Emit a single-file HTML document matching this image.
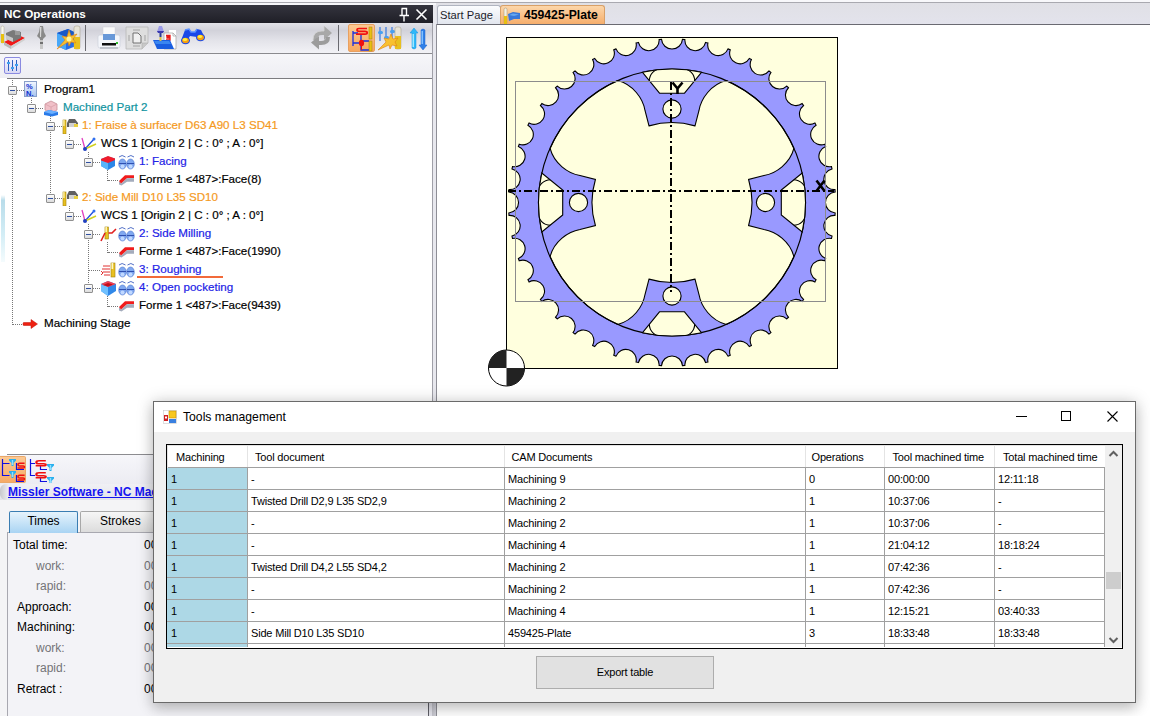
<!DOCTYPE html>
<html><head><meta charset="utf-8">
<style>
*{margin:0;padding:0;box-sizing:border-box}
html,body{width:1150px;height:716px;overflow:hidden;background:#fff;font-family:"Liberation Sans",sans-serif;position:relative}
.a{position:absolute}
svg{display:block}
#topstrip{left:0;top:0;width:1150px;height:5px;background:#f6f6f9;border-top:2px solid #f8f8fb}
#topline{left:0;top:2px;width:1150px;height:1px;background:#a9a9b0}
/* left panel */
#lp{left:0;top:5px;width:433px;height:711px;background:#fff}
#hdr{left:0;top:5px;width:433px;height:18px;background:linear-gradient(#34343e,#1f1f27);}
#hdr .t{left:4px;top:2px;color:#fff;font-weight:bold;font-size:11.7px;line-height:14px;white-space:nowrap}
#tb1{left:0;top:23px;width:433px;height:30px;background:linear-gradient(#e2e2e8 0,#d2d2da 25%,#e4e4ea 60%,#f2f2f6 100%)}
#tb1line{left:0;top:53px;width:433px;height:1px;background:#8a8a8e}
#tb2{left:0;top:54px;width:433px;height:24px;background:linear-gradient(#f6f6f9,#eeeef3)}
#tb2line{left:7px;top:78px;width:426px;height:1px;background:#7c7c80}
#lpborder{left:432px;top:23px;width:1px;height:693px;background:#a0a0a8}
#splitter{left:433px;top:5px;width:3px;height:711px;background:#e8e8ee}
/* tree */
.tr{position:absolute;font-size:11.6px;white-space:nowrap;line-height:14px;-webkit-text-stroke:0.2px currentColor}
.exp{position:absolute;width:9px;height:9px;border:1px solid #909090;background:linear-gradient(#fdfdfd,#dcdcdc);border-radius:1px}
.exp:after{content:"";position:absolute;left:1px;top:3px;width:5px;height:1px;background:#3050a0}
.dh{position:absolute;height:1px;border-top:1px dotted #777}
.dv{position:absolute;width:1px;border-left:1px dotted #777}
/* doc area */
#docstrip{left:436px;top:3px;width:714px;height:21px;background:linear-gradient(#e0e0e6,#e3e3ec)}
#docline{left:436px;top:24px;width:714px;height:1px;background:#6a6a72}
#docleft{left:436px;top:24px;width:1px;height:692px;background:#8e8e96}
#tab1{left:437px;top:5px;width:64px;height:19px;background:linear-gradient(#fbfcfe,#e2e6ee);border:1px solid #b0b4c0;border-bottom:none;border-radius:3px 3px 0 0;font-size:11.2px;color:#1c1c2c;padding:2px 0 0 2px;line-height:14px;white-space:nowrap}
#tab2{left:500px;top:5px;width:105px;height:19px;background:linear-gradient(#fcd6aa,#f6ae6c);border:1px solid #d8a068;border-bottom:none;border-radius:3px 3px 0 0;font-size:12.2px;font-weight:bold;color:#000;padding:2px 0 0 23px;line-height:14px;white-space:nowrap}
/* dialog */
#dlgshadow{left:140px;top:390px;width:1010px;height:326px;background:radial-gradient(ellipse at center,rgba(0,0,0,0.10),rgba(0,0,0,0) 70%)}
#dlg{left:153px;top:401px;width:983px;height:302px;background:#f0f0f0;border:1px solid #6a6a6a;box-shadow:0 1px 15px 1px rgba(0,0,0,0.18),0 6px 12px rgba(0,0,0,0.14)}
#dlgtitle{left:0;top:0;width:981px;height:30px;background:#fff}
#grid{left:12px;top:43px;width:957px;height:204px;border:1px solid #000;border-width:2px 2px 2px 2px;background:#fff;overflow:hidden}
.gt{position:absolute;font-size:11px;letter-spacing:-0.18px;color:#000;white-space:nowrap;line-height:13px}
#exportbtn{left:382px;top:254px;width:178px;height:33px;background:#e1e1e1;border:1px solid #adadad;font-size:11px;letter-spacing:-0.2px;text-align:center;padding-top:9px}
.lb{position:absolute;font-size:12px;color:#000;white-space:nowrap;line-height:14px}
.lb.g{color:#747478}
</style></head>
<body>
<div id="topstrip" class="a"></div>
<div id="topline" class="a"></div>
<div id="lp" class="a"></div>
<div id="hdr" class="a"><div class="a t">NC Operations</div></div>
<div id="tb1" class="a"></div>
<div id="tb1line" class="a"></div>
<div id="tb2" class="a"></div>
<div id="tb2line" class="a"></div>
<div id="lpborder" class="a"></div>
<div id="splitter" class="a"></div>

<div class="a" style="left:399px;top:7px;width:11px;height:15px"><svg width="11" height="15"><path d="M2.5,1.5 L7.5,1.5 L7.5,8 M3,1.5 L3,8 M0.5,8.5 L10,8.5 M5,8.5 L5,14.5" fill="none" stroke="#fff" stroke-width="1.4"/></svg></div>
<div class="a" style="left:415px;top:8px;width:13px;height:13px"><svg width="13" height="13"><path d="M1.5,1.5 L11.5,11.5 M11.5,1.5 L1.5,11.5" stroke="#fff" stroke-width="1.6"/></svg></div>
<!-- toolbar 1 icons -->
<div class="a" style="left:0;top:25px;width:26px;height:26px"><svg width="26" height="26">
<rect x="1" y="1" width="3" height="17" rx="1.5" fill="#f6f6f0" stroke="#b0a890" stroke-width="0.5"/><rect x="1" y="9" width="3" height="9" fill="#e8c010"/>
<path d="M4,17 L18,10 L25,13 L11,21Z" fill="#f01818"/><path d="M4,17 L11,21 L11,24 L4,20Z" fill="#b8b8b8"/><path d="M11,21 L25,13 L25,15 L11,24Z" fill="#d0d0d0"/>
<path d="M6,8 L13,5 L21,7 L21,13 L13,17 L6,14Z" fill="#7a7a7a"/><path d="M6,10 L13,13 L13,17 L6,14Z" fill="#c8c8c8"/><rect x="15" y="6" width="5" height="4" fill="#9a9a9a"/>
</svg></div>
<div class="a" style="left:36px;top:25px;width:11px;height:26px"><svg width="11" height="26">
<path d="M4,1 L7,1 L8,7 L10,11 L8,13 L7,14 L7,24 L4,24 L4,14 L3,13 L1,11 L3,7Z" fill="#8a8a8a"/><path d="M4,2 L5.5,2 L5,12 L4,12Z" fill="#d8d8d8"/><rect x="4" y="15" width="3" height="9" fill="#c8c8c8"/><rect x="4" y="17" width="3" height="2" fill="#707070"/>
</svg></div>
<div class="a" style="left:56px;top:25px;width:26px;height:26px"><svg width="26" height="26">
<path d="M1,8 L12,4 L20,8 L20,21 L10,25 L1,21Z" fill="#2a6ee8"/><path d="M1,8 L10,12 L10,25 L1,21Z" fill="#48a8f8"/><path d="M1,8 L12,4 L20,8 L10,12Z" fill="#1858c8"/>
<rect x="18" y="1" width="6" height="23" rx="2" fill="#e8e4d8" stroke="#a09880" stroke-width="0.5"/><rect x="18" y="12" width="6" height="12" fill="#e8c020"/>
<path d="M1,24 L9,15 L6,11 L11,12 L13,5 L15,11 L21,9 L17,14 L20,18 L15,17 L13,21 L12,17Z" fill="#f8c030" stroke="#e08010" stroke-width="0.6"/><circle cx="13" cy="14" r="2.5" fill="#fff4a0"/>
</svg></div>
<div class="a" style="left:85px;top:25px;width:1px;height:26px;background:#6a6a70"></div>
<div class="a" style="left:97px;top:26px;width:24px;height:24px"><svg width="24" height="24">
<rect x="6" y="1" width="12" height="8" fill="#fafafa" stroke="#d0d0d8" stroke-width="0.5"/><rect x="1" y="9" width="22" height="13" rx="2" fill="#f4f6fa" stroke="#c8ccd8" stroke-width="0.6"/><rect x="6" y="8" width="12" height="6" fill="#6898d8"/><rect x="5" y="17" width="14" height="2.5" fill="#101010"/><rect x="19" y="16" width="2" height="2" fill="#30c030"/><rect x="3" y="21" width="18" height="2" fill="#c0c4cc"/>
</svg></div>
<div class="a" style="left:125px;top:26px;width:24px;height:24px"><svg width="24" height="24">
<path d="M1,1 L23,1 L23,17 L17,23 L1,23Z" fill="#dedede" stroke="#b8b8b8" stroke-width="0.8"/><path d="M17,23 L17,17 L23,17" fill="#c8c8c8" stroke="#b0b0b0" stroke-width="0.6"/><path d="M8,7 L13,7 L16,10 L16,17 L8,17Z" fill="#f0f0f0" stroke="#707070" stroke-width="1"/><rect x="8" y="3" width="7" height="2" fill="#c0c0c0"/><rect x="8" y="19" width="7" height="2" fill="#c0c0c0"/><rect x="3" y="9" width="2" height="6" fill="#c0c0c0"/><rect x="19" y="9" width="2" height="6" fill="#c0c0c0"/>
</svg></div>
<div class="a" style="left:152px;top:24px;width:26px;height:27px"><svg width="26" height="27">
<rect x="17" y="6" width="7" height="5" fill="#fff"/>
<path d="M12,9 L21,9 L24,12 L24,25 L12,25Z" fill="#fff" stroke="#a0a0a0" stroke-width="0.7"/><path d="M21,9 L21,12 L24,12" fill="none" stroke="#a0a0a0" stroke-width="0.7"/>
<path d="M14,11.5 L18,11.5 L18,13 L15,13 L15,14 L18,14 L18,16 L14,16" fill="none" stroke="#e81818" stroke-width="1.3"/>
<path d="M1,16 L18,16 L22,25 L5,25Z" fill="#1a5ee0"/><path d="M2,17 L17,17 L19,20 L4,20Z" fill="#3a86f0"/>
<path d="M7,2 L10,2 L12,8 L5,8Z" fill="#9a9ae8"/><path d="M5,7 L12,7 L11,9 L6,9Z" fill="#3a3ab0"/><rect x="7.5" y="9" width="2" height="4" fill="#2a3a98"/><rect x="7.5" y="13" width="2" height="4" fill="#d8c040"/>
</svg></div>
<div class="a" style="left:180px;top:27px;width:26px;height:18px"><svg width="26" height="18">
<path d="M2,11 L5,3 L9,2 L11,5 L15,5 L17,2 L21,3 L24,9 L22,12 L17,10 L10,9 L7,14Z" fill="#1a48e8"/><path d="M5,3 L9,2 L11,5 L15,5 L17,2" stroke="#5a90ff" stroke-width="1.4" fill="none"/>
<ellipse cx="5.5" cy="13.5" rx="4.5" ry="3.8" fill="#1a48e8"/><ellipse cx="5.5" cy="13.5" rx="3.4" ry="2.8" fill="#f8a010"/><ellipse cx="5" cy="12.5" rx="2.2" ry="1.6" fill="#fff040"/>
<ellipse cx="20.5" cy="10.5" rx="4.5" ry="3.8" fill="#1a48e8"/><ellipse cx="20.5" cy="10.5" rx="3.4" ry="2.8" fill="#f8a010"/><ellipse cx="20" cy="9.5" rx="2.2" ry="1.6" fill="#fff040"/>
</svg></div>
<div class="a" style="left:309px;top:25px;width:25px;height:25px"><svg width="25" height="25">
<path d="M4,15 Q4,6 13,6 L15,6 L15,1 L23,8 L15,15 L15,10 L13,10 Q8,10 8,15Z" fill="#a8a8a8"/><path d="M4,15 Q4,6 13,6 L15,6 L15,1" fill="none" stroke="#d4d4d4" stroke-width="0.8"/>
<path d="M21,12 Q21,20 12,20 L10,20 L10,24.5 L2,17.5 L10,11 L10,16 L12,16 Q17,16 17,12Z" fill="#9c9c9c"/>
</svg></div>
<div class="a" style="left:338px;top:25px;width:1px;height:26px;background:#6a6a70"></div>
<div class="a" style="left:348px;top:24px;width:27px;height:28px;background:linear-gradient(#fcc890,#f7a860);border:1px solid #e8a060;border-radius:2px"><svg width="27" height="28" style="position:absolute;left:-1px;top:-1px">
<path d="M5,7 V22 M5,9 H10 M5,19 H11 M13,11 V17 H21 M13,22 V26 H21" stroke="#1830e0" stroke-width="1.3" fill="none"/>
<path d="M19,4.5 H11 Q9,4.5 9,6 Q9,7.3 11,7.3 H17 Q19.2,7.3 19.2,8.8 Q19.2,10.2 17,10.2 H8" fill="none" stroke="#f01010" stroke-width="1.7"/>
<ellipse cx="13.5" cy="19" rx="2.6" ry="3.2" fill="#f01010"/><path d="M13.5,22 V26" stroke="#f01010" stroke-width="1"/>
<rect x="21" y="3" width="3" height="12" fill="#e8c010" stroke="#a08010" stroke-width="0.5"/><rect x="21" y="17" width="3" height="10" fill="#e8c010" stroke="#a08010" stroke-width="0.5"/>
</svg></div>
<div class="a" style="left:377px;top:25px;width:26px;height:26px"><svg width="26" height="26">
<path d="M3,2 L3,16 M9,2 L9,16 M15,2 L15,16" stroke="#3878e0" stroke-width="1.2"/><rect x="1" y="6" width="5" height="3" rx="1.5" fill="#48a0f0"/><rect x="7" y="11" width="5" height="3" rx="1.5" fill="#48a0f0"/><rect x="13" y="5" width="5" height="3" rx="1.5" fill="#48a0f0"/>
<rect x="18" y="2" width="6" height="22" rx="2" fill="#e8e4d8" stroke="#a09880" stroke-width="0.5"/><rect x="18" y="11" width="6" height="13" fill="#e8c020"/>
<path d="M1,25 L9,17 L7,13 L12,14 L14,9 L16,14 L21,13 L18,17 L20,21 L15,20 L13,24 L12,20Z" fill="#f8c030" stroke="#e08010" stroke-width="0.6"/>
</svg></div>
<div class="a" style="left:409px;top:27px;width:20px;height:24px"><svg width="20" height="24">
<path d="M5,1 L9,6 L7,6 L7,21 Q5,23 3,21 L3,6 L1,6Z" fill="#30b8f8" stroke="#1890e0" stroke-width="0.5"/><rect x="3.5" y="7" width="1.5" height="13" fill="#a0e8ff"/>
<path d="M14,23 L18,18 L16,18 L16,3 Q14,1 12,3 L12,18 L10,18Z" fill="#3080e8" stroke="#1860c8" stroke-width="0.5"/><rect x="12.5" y="4" width="1.5" height="13" fill="#80c0ff"/>
</svg></div>
<!-- toolbar 2 icon -->
<div class="a" style="left:4px;top:57px;width:17px;height:17px;border:1px solid #8a8ae0;border-radius:2px;background:linear-gradient(#f4f4ff,#d8d8f4)"><svg width="15" height="15" style="position:absolute;left:0;top:0"><path d="M3.5,2 L3.5,13 M7.5,2 L7.5,13 M11.5,2 L11.5,13" stroke="#3060c0" stroke-width="1"/><rect x="2" y="4" width="3" height="2" fill="#40a0f0"/><rect x="6" y="9" width="3" height="2" fill="#40a0f0"/><rect x="10" y="6" width="3" height="2" fill="#40a0f0"/></svg></div>

<div class="dh" style="left:13px;top:90px;width:11px"></div>
<div class="dh" style="left:32px;top:108px;width:11px"></div>
<div class="dh" style="left:51px;top:126px;width:11px"></div>
<div class="dh" style="left:70px;top:144px;width:11px"></div>
<div class="dh" style="left:89px;top:162px;width:11px"></div>
<div class="dh" style="left:108px;top:180px;width:10px"></div>
<div class="dh" style="left:51px;top:198px;width:11px"></div>
<div class="dh" style="left:70px;top:216px;width:11px"></div>
<div class="dh" style="left:89px;top:234px;width:11px"></div>
<div class="dh" style="left:108px;top:252px;width:10px"></div>
<div class="dh" style="left:89px;top:270px;width:11px"></div>
<div class="dh" style="left:89px;top:288px;width:11px"></div>
<div class="dh" style="left:108px;top:306px;width:10px"></div>
<div class="dh" style="left:13px;top:324px;width:11px"></div>
<div class="dv" style="left:12px;top:80px;height:245px"></div>
<div class="dv" style="left:31px;top:98px;height:11px"></div>
<div class="dv" style="left:50px;top:116px;height:83px"></div>
<div class="dv" style="left:69px;top:134px;height:11px"></div>
<div class="dv" style="left:88px;top:152px;height:11px"></div>
<div class="dv" style="left:107px;top:170px;height:11px"></div>
<div class="dv" style="left:69px;top:206px;height:11px"></div>
<div class="dv" style="left:88px;top:224px;height:65px"></div>
<div class="dv" style="left:107px;top:242px;height:11px"></div>
<div class="dv" style="left:107px;top:296px;height:11px"></div>
<div class="exp" style="left:8px;top:86px"></div>
<div class="a" style="left:24px;top:81px;width:17px;height:17px"><svg width="13" height="16"><defs><linearGradient id="gp" x1="0" y1="0" x2="0" y2="1"><stop offset="0" stop-color="#f4f8ff"/><stop offset="1" stop-color="#a8c4f0"/></linearGradient></defs><rect x="0.5" y="0.5" width="12" height="15" fill="url(#gp)" stroke="#8aa0c8"/><text x="2" y="7.5" font-size="7.5" font-weight="bold" fill="#1030d0" font-family="Liberation Sans">%</text><text x="2" y="14.5" font-size="7.5" font-weight="bold" fill="#1030d0" font-family="Liberation Sans">N.</text></svg></div>
<div class="tr" style="left:44px;top:82px;color:#000">Program1</div>
<div class="exp" style="left:27px;top:104px"></div>
<div class="a" style="left:43px;top:100px;width:17px;height:17px"><svg width="16" height="17"><path d="M2,4 L8,1 L14,4 L14,10 L8,13 L2,10Z" fill="#f0c0c8" stroke="#c89098" stroke-width="0.8"/><path d="M2,4 L8,7 L14,4 M8,7 L8,13" fill="none" stroke="#d8a0a8" stroke-width="0.8"/><path d="M1,12 L6,10 L15,12 L15,15 L9,16.5 L1,15Z" fill="#2a7ae8"/><path d="M1,12 L6,10 L15,12 L9,14Z" fill="#6ab0ff"/></svg></div>
<div class="tr" style="left:63px;top:100px;color:#1094a0">Machined Part 2</div>
<div class="exp" style="left:46px;top:122px"></div>
<div class="a" style="left:62px;top:118px;width:17px;height:17px"><svg width="17" height="16"><rect x="1" y="2" width="3" height="14" fill="#e8c020" stroke="#a08010" stroke-width="0.6"/><rect x="1.3" y="2" width="1.2" height="6" fill="#fff8c0"/><path d="M5,9 L5,5 L7,1 L13,1 L16,5 L16,9Z" fill="#606060"/><path d="M7,5 L14,5 L14,9 L7,9Z" fill="#d0d0d0"/><rect x="12" y="6" width="4" height="3" fill="#e8d040"/></svg></div>
<div class="tr" style="left:82px;top:118px;color:#f59a1e">1: Fraise à surfacer D63 A90 L3 SD41</div>
<div class="exp" style="left:65px;top:140px"></div>
<div class="a" style="left:81px;top:136px;width:17px;height:17px"><svg width="17" height="16"><path d="M4,13 L1,2" stroke="#e040c0" stroke-width="1.3"/><path d="M4,13 L13,3" stroke="#2050e0" stroke-width="1.3"/><path d="M4,13 L15,8" stroke="#d0d020" stroke-width="1.5"/><circle cx="4" cy="13" r="2" fill="#2040c0"/><circle cx="13" cy="3" r="1.5" fill="#3070f0"/></svg></div>
<div class="tr" style="left:101px;top:136px;color:#000">WCS 1 [Origin 2 | C : 0° ; A : 0°]</div>
<div class="exp" style="left:84px;top:158px"></div>
<div class="a" style="left:100px;top:154px;width:17px;height:17px"><svg width="17" height="17"><path d="M1,5 L8,2.5 L15,4.5 L15,12 L8,16 L1,12Z" fill="#2a86e8"/><path d="M1,5 L8,8 L8,16 L1,12Z" fill="#58b4fa"/><path d="M1,5 L8,2 L15,4.5 L15,6 L8,9 L1,6.5Z" fill="#f01c2c"/></svg></div>
<div class="a" style="left:118px;top:154px;width:17px;height:17px"><svg width="17" height="16"><path d="M1,3 Q4,0 7.5,3 M9.5,3 Q13,0 16,3" fill="none" stroke="#4060c0" stroke-width="0.9"/><ellipse cx="4.5" cy="10" rx="3.8" ry="5" fill="#80a8f0" stroke="#5078d0" stroke-width="0.6"/><ellipse cx="12.5" cy="10" rx="3.8" ry="5" fill="#80a8f0" stroke="#5078d0" stroke-width="0.6"/><path d="M1,9.5 L8,9.5 M9,9.5 L16,9.5" stroke="#3050b0" stroke-width="1.2"/><ellipse cx="4.5" cy="12.5" rx="2" ry="2" fill="#c0d8ff"/><ellipse cx="12.5" cy="12.5" rx="2" ry="2" fill="#c0d8ff"/></svg></div>
<div class="tr" style="left:139px;top:154px;color:#2222e6">1: Facing</div>
<div class="a" style="left:118px;top:172px;width:17px;height:17px"><svg width="17" height="17"><path d="M1,9 L3,11.5 L9,6 L16,6 L16,9.8 L9,9.8 L3.5,13.5 L1,12.5Z" fill="#a4acbc"/><path d="M3,11.5 L9,6 L16,6" stroke="#c4ccd8" stroke-width="0.8" fill="none"/><path d="M1,9 L7,3.2 L16,3.2 L16,6 L9,6 L3,11.5Z" fill="#f01c1c"/></svg></div>
<div class="tr" style="left:139px;top:172px;color:#000">Forme 1 &lt;487&gt;:Face(8)</div>
<div class="exp" style="left:46px;top:194px"></div>
<div class="a" style="left:62px;top:190px;width:17px;height:17px"><svg width="17" height="16"><rect x="1" y="2" width="3" height="14" fill="#e8c020" stroke="#a08010" stroke-width="0.6"/><rect x="1.3" y="2" width="1.2" height="6" fill="#fff8c0"/><path d="M5,9 L5,5 L7,1 L13,1 L16,5 L16,9Z" fill="#606060"/><path d="M7,5 L14,5 L14,9 L7,9Z" fill="#d0d0d0"/><rect x="12" y="6" width="4" height="3" fill="#e8d040"/></svg></div>
<div class="tr" style="left:82px;top:190px;color:#f59a1e">2: Side Mill D10 L35 SD10</div>
<div class="exp" style="left:65px;top:212px"></div>
<div class="a" style="left:81px;top:208px;width:17px;height:17px"><svg width="17" height="16"><path d="M4,13 L1,2" stroke="#e040c0" stroke-width="1.3"/><path d="M4,13 L13,3" stroke="#2050e0" stroke-width="1.3"/><path d="M4,13 L15,8" stroke="#d0d020" stroke-width="1.5"/><circle cx="4" cy="13" r="2" fill="#2040c0"/><circle cx="13" cy="3" r="1.5" fill="#3070f0"/></svg></div>
<div class="tr" style="left:101px;top:208px;color:#000">WCS 1 [Origin 2 | C : 0° ; A : 0°]</div>
<div class="exp" style="left:84px;top:230px"></div>
<div class="a" style="left:100px;top:226px;width:17px;height:17px"><svg width="17" height="16"><rect x="5" y="1" width="3.5" height="12" fill="#e8c020" stroke="#a08010" stroke-width="0.6"/><rect x="5.4" y="1" width="1.5" height="5" fill="#fff8c0"/><path d="M1,15 L5,7 M8.5,7 L12,7 L16,3" stroke="#e02020" stroke-width="1.6" fill="none"/></svg></div>
<div class="a" style="left:118px;top:226px;width:17px;height:17px"><svg width="17" height="16"><path d="M1,3 Q4,0 7.5,3 M9.5,3 Q13,0 16,3" fill="none" stroke="#4060c0" stroke-width="0.9"/><ellipse cx="4.5" cy="10" rx="3.8" ry="5" fill="#80a8f0" stroke="#5078d0" stroke-width="0.6"/><ellipse cx="12.5" cy="10" rx="3.8" ry="5" fill="#80a8f0" stroke="#5078d0" stroke-width="0.6"/><path d="M1,9.5 L8,9.5 M9,9.5 L16,9.5" stroke="#3050b0" stroke-width="1.2"/><ellipse cx="4.5" cy="12.5" rx="2" ry="2" fill="#c0d8ff"/><ellipse cx="12.5" cy="12.5" rx="2" ry="2" fill="#c0d8ff"/></svg></div>
<div class="tr" style="left:139px;top:226px;color:#2222e6">2: Side Milling</div>
<div class="a" style="left:118px;top:244px;width:17px;height:17px"><svg width="17" height="17"><path d="M1,9 L3,11.5 L9,6 L16,6 L16,9.8 L9,9.8 L3.5,13.5 L1,12.5Z" fill="#a4acbc"/><path d="M3,11.5 L9,6 L16,6" stroke="#c4ccd8" stroke-width="0.8" fill="none"/><path d="M1,9 L7,3.2 L16,3.2 L16,6 L9,6 L3,11.5Z" fill="#f01c1c"/></svg></div>
<div class="tr" style="left:139px;top:244px;color:#000">Forme 1 &lt;487&gt;:Face(1990)</div>
<div class="a" style="left:100px;top:262px;width:17px;height:17px"><svg width="17" height="16"><path d="M3,4 L10,4 M2,7 L10,7 M3,10 L10,10 M4,13 L10,13 M1,9 L3,11 L1,13" stroke="#e03030" stroke-width="1" fill="none"/><rect x="11" y="1" width="4" height="14" fill="#e8c020" stroke="#a08010" stroke-width="0.6"/><rect x="11.5" y="1" width="1.7" height="6" fill="#fff8c0"/></svg></div>
<div class="a" style="left:118px;top:262px;width:17px;height:17px"><svg width="17" height="16"><path d="M1,3 Q4,0 7.5,3 M9.5,3 Q13,0 16,3" fill="none" stroke="#4060c0" stroke-width="0.9"/><ellipse cx="4.5" cy="10" rx="3.8" ry="5" fill="#80a8f0" stroke="#5078d0" stroke-width="0.6"/><ellipse cx="12.5" cy="10" rx="3.8" ry="5" fill="#80a8f0" stroke="#5078d0" stroke-width="0.6"/><path d="M1,9.5 L8,9.5 M9,9.5 L16,9.5" stroke="#3050b0" stroke-width="1.2"/><ellipse cx="4.5" cy="12.5" rx="2" ry="2" fill="#c0d8ff"/><ellipse cx="12.5" cy="12.5" rx="2" ry="2" fill="#c0d8ff"/></svg></div>
<div class="tr" style="left:139px;top:262px;color:#2222e6">3: Roughing</div>
<div class="exp" style="left:84px;top:284px"></div>
<div class="a" style="left:100px;top:280px;width:17px;height:17px"><svg width="17" height="17"><path d="M1,4 L8,1 L16,4 L16,11 L8,16 L1,11Z" fill="#3088e8"/><path d="M1,4 L8,7 L8,16 L1,11Z" fill="#70c0ff"/><path d="M1,4 L8,1 L16,4 L8,7Z" fill="#f04050"/><path d="M3,5 L8,3 L13,4.5 L8,6.5Z" fill="#c01020"/></svg></div>
<div class="a" style="left:118px;top:280px;width:17px;height:17px"><svg width="17" height="16"><path d="M1,3 Q4,0 7.5,3 M9.5,3 Q13,0 16,3" fill="none" stroke="#4060c0" stroke-width="0.9"/><ellipse cx="4.5" cy="10" rx="3.8" ry="5" fill="#80a8f0" stroke="#5078d0" stroke-width="0.6"/><ellipse cx="12.5" cy="10" rx="3.8" ry="5" fill="#80a8f0" stroke="#5078d0" stroke-width="0.6"/><path d="M1,9.5 L8,9.5 M9,9.5 L16,9.5" stroke="#3050b0" stroke-width="1.2"/><ellipse cx="4.5" cy="12.5" rx="2" ry="2" fill="#c0d8ff"/><ellipse cx="12.5" cy="12.5" rx="2" ry="2" fill="#c0d8ff"/></svg></div>
<div class="tr" style="left:139px;top:280px;color:#2222e6">4: Open pocketing</div>
<div class="a" style="left:118px;top:298px;width:17px;height:17px"><svg width="17" height="17"><path d="M1,9 L3,11.5 L9,6 L16,6 L16,9.8 L9,9.8 L3.5,13.5 L1,12.5Z" fill="#a4acbc"/><path d="M3,11.5 L9,6 L16,6" stroke="#c4ccd8" stroke-width="0.8" fill="none"/><path d="M1,9 L7,3.2 L16,3.2 L16,6 L9,6 L3,11.5Z" fill="#f01c1c"/></svg></div>
<div class="tr" style="left:139px;top:298px;color:#000">Forme 1 &lt;487&gt;:Face(9439)</div>
<div class="a" style="left:22px;top:316px;width:17px;height:17px"><svg width="17" height="17"><path d="M1.5,6.5 L9,6.5 L9,3.5 L15.5,8 L9,12.5 L9,9.5 L1.5,9.5 Q0.3,8 1.5,6.5Z" fill="#ee2010" stroke="#c01008" stroke-width="0.5"/></svg></div>
<div class="tr" style="left:44px;top:316px;color:#000">Machining Stage</div>
<div class="a" style="left:137px;top:276px;width:86px;height:2px;background:#f26a3a"></div>
<div class="a" style="left:1px;top:195px;width:4px;height:67px;background:linear-gradient(#fff 0,#b8dcea 8%,#d4eef6 60%,#f4fbfd 100%)"></div>
<div class="a" style="left:7px;top:454px;width:426px;height:1px;background:#8c8c90"></div>
<div class="a" style="left:0;top:455px;width:432px;height:29px;background:linear-gradient(#f6f6fa,#ececf2)"></div>
<div class="a" style="left:0;top:456px;width:26px;height:27px;background:linear-gradient(#fbc994,#f6aa66);border:1px solid #eaa868;border-left:none;border-radius:0 2px 2px 0"></div>
<div class="a" style="left:0;top:456px;width:26px;height:27px"><svg width="26" height="27"><path d="M2.5,3 V19.5 H9.5 M2.5,7.5 H9.5" stroke="#1010e0" stroke-width="1.2" fill="none"/><path transform="translate(9,3)" d="M0,0 H7 V1.5 L4.5,4 V7 H2.5 V4 L0,1.5Z" fill="#2ab0ee"/><rect x="11.8" y="4" width="1.4" height="5" fill="#90e0ff"/><path transform="translate(9,15)" d="M0,0 H7 V1.5 L4.5,4 V7 H2.5 V4 L0,1.5Z" fill="#2ab0ee"/><rect x="11.8" y="16" width="1.4" height="5" fill="#90e0ff"/><path d="M16.5,7 V13.5 H24 M16.5,19 V25.5 H24" stroke="#1010e0" stroke-width="1.2" fill="none"/><path transform="translate(17,6.5) scale(0.95)" d="M8,0.8 H3 Q1,0.8 1,2.4 Q1,3.8 3,3.8 H6.5 Q8,3.8 8,4.8 Q8,5.8 6.5,5.8 H0.5" fill="none" stroke="#ee1010" stroke-width="1.6"/><path transform="translate(17,18.5) scale(0.95)" d="M8,0.8 H3 Q1,0.8 1,2.4 Q1,3.8 3,3.8 H6.5 Q8,3.8 8,4.8 Q8,5.8 6.5,5.8 H0.5" fill="none" stroke="#ee1010" stroke-width="1.6"/></svg></div>
<div class="a" style="left:29px;top:456px;width:26px;height:27px"><svg width="26" height="27"><path d="M1.5,3 V19.5 H6 M1.5,7.5 H6" stroke="#1010e0" stroke-width="1.2" fill="none"/><path d="M11.5,9.5 V13.5 H18 M11.5,21.5 V25.5 H18" stroke="#1010e0" stroke-width="1.2" fill="none"/><path transform="translate(6,4) scale(1.35,1)" d="M8,0.8 H3 Q1,0.8 1,2.4 Q1,3.8 3,3.8 H6.5 Q8,3.8 8,4.8 Q8,5.8 6.5,5.8 H0.5" fill="none" stroke="#ee1010" stroke-width="1.6"/><path transform="translate(6,16) scale(1.35,1)" d="M8,0.8 H3 Q1,0.8 1,2.4 Q1,3.8 3,3.8 H6.5 Q8,3.8 8,4.8 Q8,5.8 6.5,5.8 H0.5" fill="none" stroke="#ee1010" stroke-width="1.6"/><path transform="translate(18,8)" d="M0,0 H7 V1.5 L4.5,4 V7 H2.5 V4 L0,1.5Z" fill="#2ab0ee"/><rect x="20.8" y="9" width="1.4" height="5" fill="#90e0ff"/><path transform="translate(18,21)" d="M0,0 H7 V1.5 L4.5,4 V7 H2.5 V4 L0,1.5Z" fill="#2ab0ee"/><rect x="20.8" y="22" width="1.4" height="5" fill="#90e0ff"/></svg></div>
<div class="a" style="left:0;top:484px;width:432px;height:16px;background:linear-gradient(#f0f0f4,#e4e4ea)"></div>
<div class="a" style="left:0;top:484px;width:8px;height:16px;background:linear-gradient(90deg,#c8c8cc,#ececf0);border-radius:6px 0 0 6px"></div>
<div class="a" style="left:8px;top:485px;font-size:12px;font-weight:bold;color:#1414f0;text-decoration:underline;white-space:nowrap;line-height:14px">Missler Software - NC Machining</div>
<div class="a" style="left:0;top:500px;width:432px;height:216px;background:#f4f4f6"></div>
<div class="a" style="left:7px;top:532px;width:425px;height:184px;background:#f3f3f7;border-left:1px solid #a8a8b0;border-top:1px solid #a8a8b0"></div>
<div class="a" style="left:9px;top:511px;width:69px;height:22px;background:linear-gradient(#e6f3fc,#a9d4f3);border:1px solid #3a7db2;border-bottom:none;border-radius:2px 2px 0 0;font-size:12px;color:#000;text-align:center;line-height:19px">Times</div>
<div class="a" style="left:80px;top:511px;width:90px;height:21px;background:linear-gradient(#f6f6f6,#dcdcdc);border:1px solid #a8a8a8;border-bottom:none;border-radius:2px 2px 0 0;font-size:12px;color:#000;line-height:19px;padding-left:19px">Strokes</div>
<div class="lb" style="left:13px;top:538px">Total time:</div>
<div class="lb g" style="left:36px;top:559px">work:</div>
<div class="lb g" style="left:36px;top:579px">rapid:</div>
<div class="lb" style="left:17px;top:600px">Approach:</div>
<div class="lb" style="left:17px;top:620px">Machining:</div>
<div class="lb g" style="left:36px;top:641px">work:</div>
<div class="lb g" style="left:36px;top:661px">rapid:</div>
<div class="lb" style="left:17px;top:682px">Retract :</div>
<div class="lb" style="left:144px;top:538px">00</div>
<div class="lb g" style="left:144px;top:559px">00</div>
<div class="lb g" style="left:144px;top:579px">00</div>
<div class="lb" style="left:144px;top:600px">00</div>
<div class="lb" style="left:144px;top:620px">00</div>
<div class="lb g" style="left:144px;top:641px">00</div>
<div class="lb g" style="left:144px;top:661px">00</div>
<div class="lb" style="left:144px;top:682px">00</div>

<div id="lpbot" class="a" style="left:428px;top:690px;width:1px;height:26px;background:#5e5e66"></div>
<div class="a" style="left:429px;top:690px;width:7px;height:26px;background:linear-gradient(90deg,#e4e4ec 0,#e4e4ec 40%,#c4c4cc 45%,#d0d0d8 100%)"></div>

<div id="docstrip" class="a"></div>
<div id="tab1" class="a">Start Page</div>
<div id="tab2" class="a">459425-Plate<svg width="18" height="17" style="position:absolute;left:2px;top:1px"><rect x="1" y="1" width="3" height="16" rx="1.5" fill="#f4f0e0" stroke="#a09070" stroke-width="0.5"/><rect x="1" y="9" width="3" height="8" fill="#e8c010"/><path d="M5,7 L10,5 L17,6 L17,12 L11,12 L6,14Z" fill="#3a78d8"/><path d="M6,8 L10,6.5 L16,7.5 L11,9Z" fill="#68a8f0"/></svg></div>
<div id="docline" class="a"></div>
<div id="docleft" class="a"></div>
<svg class="a" style="left:0;top:0" width="1150" height="716" viewBox="0 0 1150 716">
<rect x="506.5" y="37.5" width="331" height="331" fill="#ffffde" stroke="#000" stroke-width="1" shape-rendering="crispEdges"/>
<path d="M835.16,192.03 A10.5,10.5 0 0 0 835.16,212.97 A163.5,163.5 0 0 1 834.99,215.36 A10.5,10.5 0 0 0 832.01,236.08 A163.5,163.5 0 0 1 831.50,238.43 A10.5,10.5 0 0 0 825.61,258.51 A163.5,163.5 0 0 1 824.77,260.76 A10.5,10.5 0 0 0 816.07,279.80 A163.5,163.5 0 0 1 814.92,281.91 A10.5,10.5 0 0 0 803.60,299.52 A163.5,163.5 0 0 1 802.17,301.44 A10.5,10.5 0 0 0 788.46,317.26 A163.5,163.5 0 0 1 786.76,318.96 A10.5,10.5 0 0 0 770.94,332.67 A163.5,163.5 0 0 1 769.02,334.10 A10.5,10.5 0 0 0 751.41,345.42 A163.5,163.5 0 0 1 749.30,346.57 A10.5,10.5 0 0 0 730.26,355.27 A163.5,163.5 0 0 1 728.01,356.11 A10.5,10.5 0 0 0 707.93,362.00 A163.5,163.5 0 0 1 705.58,362.51 A10.5,10.5 0 0 0 684.86,365.49 A163.5,163.5 0 0 1 682.47,365.66 A10.5,10.5 0 0 0 661.53,365.66 A163.5,163.5 0 0 1 659.14,365.49 A10.5,10.5 0 0 0 638.42,362.51 A163.5,163.5 0 0 1 636.07,362.00 A10.5,10.5 0 0 0 615.99,356.11 A163.5,163.5 0 0 1 613.74,355.27 A10.5,10.5 0 0 0 594.70,346.57 A163.5,163.5 0 0 1 592.59,345.42 A10.5,10.5 0 0 0 574.98,334.10 A163.5,163.5 0 0 1 573.06,332.67 A10.5,10.5 0 0 0 557.24,318.96 A163.5,163.5 0 0 1 555.54,317.26 A10.5,10.5 0 0 0 541.83,301.44 A163.5,163.5 0 0 1 540.40,299.52 A10.5,10.5 0 0 0 529.08,281.91 A163.5,163.5 0 0 1 527.93,279.80 A10.5,10.5 0 0 0 519.23,260.76 A163.5,163.5 0 0 1 518.39,258.51 A10.5,10.5 0 0 0 512.50,238.43 A163.5,163.5 0 0 1 511.99,236.08 A10.5,10.5 0 0 0 509.01,215.36 A163.5,163.5 0 0 1 508.84,212.97 A10.5,10.5 0 0 0 508.84,192.03 A163.5,163.5 0 0 1 509.01,189.64 A10.5,10.5 0 0 0 511.99,168.92 A163.5,163.5 0 0 1 512.50,166.57 A10.5,10.5 0 0 0 518.39,146.49 A163.5,163.5 0 0 1 519.23,144.24 A10.5,10.5 0 0 0 527.93,125.20 A163.5,163.5 0 0 1 529.08,123.09 A10.5,10.5 0 0 0 540.40,105.48 A163.5,163.5 0 0 1 541.83,103.56 A10.5,10.5 0 0 0 555.54,87.74 A163.5,163.5 0 0 1 557.24,86.04 A10.5,10.5 0 0 0 573.06,72.33 A163.5,163.5 0 0 1 574.98,70.90 A10.5,10.5 0 0 0 592.59,59.58 A163.5,163.5 0 0 1 594.70,58.43 A10.5,10.5 0 0 0 613.74,49.73 A163.5,163.5 0 0 1 615.99,48.89 A10.5,10.5 0 0 0 636.07,43.00 A163.5,163.5 0 0 1 638.42,42.49 A10.5,10.5 0 0 0 659.14,39.51 A163.5,163.5 0 0 1 661.53,39.34 A10.5,10.5 0 0 0 682.47,39.34 A163.5,163.5 0 0 1 684.86,39.51 A10.5,10.5 0 0 0 705.58,42.49 A163.5,163.5 0 0 1 707.93,43.00 A10.5,10.5 0 0 0 728.01,48.89 A163.5,163.5 0 0 1 730.26,49.73 A10.5,10.5 0 0 0 749.30,58.43 A163.5,163.5 0 0 1 751.41,59.58 A10.5,10.5 0 0 0 769.02,70.90 A163.5,163.5 0 0 1 770.94,72.33 A10.5,10.5 0 0 0 786.76,86.04 A163.5,163.5 0 0 1 788.46,87.74 A10.5,10.5 0 0 0 802.17,103.56 A163.5,163.5 0 0 1 803.60,105.48 A10.5,10.5 0 0 0 814.92,123.09 A163.5,163.5 0 0 1 816.07,125.20 A10.5,10.5 0 0 0 824.77,144.24 A163.5,163.5 0 0 1 825.61,146.49 A10.5,10.5 0 0 0 831.50,166.57 A163.5,163.5 0 0 1 832.01,168.92 A10.5,10.5 0 0 0 834.99,189.64 A163.5,163.5 0 0 1 835.16,192.03Z" fill="#9999ff" stroke="#000" stroke-width="1.1"/>
<path d="M748.60,179.50 A80.0,80.0 0 0 1 748.60,225.50 L764.00,229.50 C776.00,231.50 790.00,241.50 793.96,256.80 A133.5,133.5 0 0 1 726.30,324.46 C711.00,320.50 701.00,306.50 699.00,294.50 L695.00,279.10 A80.0,80.0 0 0 1 649.00,279.10 L645.00,294.50 C643.00,306.50 633.00,320.50 617.70,324.46 A133.5,133.5 0 0 1 550.04,256.80 C554.00,241.50 568.00,231.50 580.00,229.50 L595.40,225.50 A80.0,80.0 0 0 1 595.40,179.50 L580.00,175.50 C568.00,173.50 554.00,163.50 550.04,148.20 A133.5,133.5 0 0 1 617.70,80.54 C633.00,84.50 643.00,98.50 645.00,110.50 L649.00,125.90 A80.0,80.0 0 0 1 695.00,125.90 L699.00,110.50 C701.00,98.50 711.00,84.50 726.30,80.54 A133.5,133.5 0 0 1 793.96,148.20 C790.00,163.50 776.00,173.50 764.00,175.50 L748.60,179.50Z" fill="#ffffde" stroke="#000" stroke-width="1.1"/>
<circle cx="672.0" cy="202.5" r="133.5" fill="none" stroke="#000" stroke-width="1.2"/>
<path d="M781.30,190.00 L802.20,173.00 A133.5,133.5 0 0 1 802.20,232.00 L781.30,215.00 Z M684.50,311.80 L701.50,332.70 A133.5,133.5 0 0 1 642.50,332.70 L659.50,311.80 Z M562.70,215.00 L541.80,232.00 A133.5,133.5 0 0 1 541.80,173.00 L562.70,190.00 Z M659.50,93.20 L642.50,72.30 A133.5,133.5 0 0 1 701.50,72.30 L684.50,93.20 Z" fill="#ffffde" stroke="#000" stroke-width="1.1"/>
<clipPath id="cutclip"><path d="M781.30,190.00 L802.20,173.00 A133.5,133.5 0 0 1 802.20,232.00 L781.30,215.00 Z M684.50,311.80 L701.50,332.70 A133.5,133.5 0 0 1 642.50,332.70 L659.50,311.80 Z M562.70,215.00 L541.80,232.00 A133.5,133.5 0 0 1 541.80,173.00 L562.70,190.00 Z M659.50,93.20 L642.50,72.30 A133.5,133.5 0 0 1 701.50,72.30 L684.50,93.20 Z"/></clipPath>
<path d="M768.00,192.30 A12.5,12.5 0 0 1 780.50,179.80 L793.50,179.80 A12.5,12.5 0 0 1 806.00,192.30 L806.00,212.70 A12.5,12.5 0 0 1 793.50,225.20 L780.50,225.20 A12.5,12.5 0 0 1 768.00,212.70 Z M682.20,298.50 A12.5,12.5 0 0 1 694.70,311.00 L694.70,324.00 A12.5,12.5 0 0 1 682.20,336.50 L661.80,336.50 A12.5,12.5 0 0 1 649.30,324.00 L649.30,311.00 A12.5,12.5 0 0 1 661.80,298.50 Z M576.00,212.70 A12.5,12.5 0 0 1 563.50,225.20 L550.50,225.20 A12.5,12.5 0 0 1 538.00,212.70 L538.00,192.30 A12.5,12.5 0 0 1 550.50,179.80 L563.50,179.80 A12.5,12.5 0 0 1 576.00,192.30 Z M661.80,106.50 A12.5,12.5 0 0 1 649.30,94.00 L649.30,81.00 A12.5,12.5 0 0 1 661.80,68.50 L682.20,68.50 A12.5,12.5 0 0 1 694.70,81.00 L694.70,94.00 A12.5,12.5 0 0 1 682.20,106.50 Z" fill="none" stroke="#000" stroke-width="1.1" clip-path="url(#cutclip)"/>
<g fill="#ffffde" stroke="#000" stroke-width="1.1"><circle cx="765.50" cy="202.50" r="9.1"/><circle cx="672.00" cy="296.00" r="9.1"/><circle cx="578.50" cy="202.50" r="9.1"/><circle cx="672.00" cy="109.00" r="9.1"/></g>
<rect x="515.5" y="81.5" width="310" height="220" fill="none" stroke="#8c8c8c" stroke-width="1" shape-rendering="crispEdges"/>
<line x1="508" y1="191" x2="834" y2="191" stroke="#000" stroke-width="2" stroke-dasharray="8 3 2 3"/>
<line x1="671" y1="82" x2="671" y2="292" stroke="#000" stroke-width="2" stroke-dasharray="8 3 2 3"/>
<path d="M672.5,82.5 L677.5,88.5 L682.5,82.5 M677.5,88.5 L677.5,94" fill="none" stroke="#000" stroke-width="2.6"/>
<path d="M816.5,180.5 L824.5,191 M824.5,180.5 L816.5,191" fill="none" stroke="#000" stroke-width="2.6"/>
<circle cx="506.5" cy="368" r="18" fill="#fff" stroke="#000" stroke-width="1"/>
<path d="M506.5,368 L506.5,350 A18,18 0 0 0 488.5,368 Z M506.5,368 L524.5,368 A18,18 0 0 1 506.5,386 Z" fill="#222"/>
</svg>

<div id="dlg" class="a">
  <div id="dlgtitle" class="a"></div>
  <div class="a" style="left:9px;top:8px;width:14px;height:14px"><svg width="14" height="14"><rect x="0.5" y="0.5" width="13" height="13" fill="#fff" stroke="#c8c8c8" stroke-width="0.6"/><rect x="6" y="1" width="7" height="7" fill="#f8c820" stroke="#c89000" stroke-width="0.6"/><rect x="1" y="5" width="4" height="6" fill="#d02020"/><rect x="2" y="6.5" width="2" height="2" fill="#fff"/><rect x="6" y="9" width="7" height="4" fill="#3a80e0"/></svg></div>
  <div class="a" style="left:29px;top:8px;font-size:12.2px;color:#000;white-space:nowrap;line-height:14px">Tools management</div>
  <div class="a" style="left:862px;top:14px;width:11px;height:1px;background:#000"></div>
  <div class="a" style="left:907px;top:9px;width:10px;height:10px;border:1px solid #000"></div>
  <div class="a" style="left:953px;top:9px;width:11px;height:11px"><svg width="11" height="11"><path d="M0.5,0.5 L10.5,10.5 M10.5,0.5 L0.5,10.5" stroke="#000" stroke-width="1.1"/></svg></div>
  <div id="exportbtn" class="a">Export table</div>
</div>
<div class="a" style="left:166px;top:444px;width:957px;height:205px;border:1px solid #000;background:#fff"></div>
<div class="a" style="left:167px;top:445px;width:955px;height:203px;border-left:1px solid #e3e3e3;border-top:1px solid #e3e3e3"></div>
<div class="gt" style="left:176px;top:451px">Machining</div>
<div class="gt" style="left:255px;top:451px">Tool document</div>
<div class="a" style="left:247px;top:446px;width:1px;height:21px;background:#e4e4e4"></div>
<div class="gt" style="left:511.5px;top:451px">CAM Documents</div>
<div class="a" style="left:504px;top:446px;width:1px;height:21px;background:#e4e4e4"></div>
<div class="gt" style="left:811.5px;top:451px">Operations</div>
<div class="a" style="left:805px;top:446px;width:1px;height:21px;background:#e4e4e4"></div>
<div class="gt" style="left:892.5px;top:451px">Tool machined time</div>
<div class="a" style="left:884px;top:446px;width:1px;height:21px;background:#e4e4e4"></div>
<div class="gt" style="left:1003px;top:451px">Total machined time</div>
<div class="a" style="left:994px;top:446px;width:1px;height:21px;background:#e4e4e4"></div>
<div class="a" style="left:168px;top:467px;width:937px;height:1px;background:#a0a0a0"></div>
<div class="a" style="left:167px;top:468px;width:80px;height:21px;background:#add8e6"></div>
<div class="gt" style="left:171px;top:473px">1</div>
<div class="gt" style="left:251px;top:473px">-</div>
<div class="gt" style="left:508px;top:473px">Machining 9</div>
<div class="gt" style="left:809px;top:473px">0</div>
<div class="gt" style="left:888px;top:473px">00:00:00</div>
<div class="gt" style="left:998px;top:473px">12:11:18</div>
<div class="a" style="left:167px;top:489px;width:938px;height:1px;background:#a0a0a0"></div>
<div class="a" style="left:167px;top:490px;width:80px;height:21px;background:#add8e6"></div>
<div class="gt" style="left:171px;top:495px">1</div>
<div class="gt" style="left:251px;top:495px">Twisted Drill D2,9 L35 SD2,9</div>
<div class="gt" style="left:508px;top:495px">Machining 2</div>
<div class="gt" style="left:809px;top:495px">1</div>
<div class="gt" style="left:888px;top:495px">10:37:06</div>
<div class="gt" style="left:998px;top:495px">-</div>
<div class="a" style="left:167px;top:511px;width:938px;height:1px;background:#a0a0a0"></div>
<div class="a" style="left:167px;top:512px;width:80px;height:21px;background:#add8e6"></div>
<div class="gt" style="left:171px;top:517px">1</div>
<div class="gt" style="left:251px;top:517px">-</div>
<div class="gt" style="left:508px;top:517px">Machining 2</div>
<div class="gt" style="left:809px;top:517px">1</div>
<div class="gt" style="left:888px;top:517px">10:37:06</div>
<div class="gt" style="left:998px;top:517px">-</div>
<div class="a" style="left:167px;top:533px;width:938px;height:1px;background:#a0a0a0"></div>
<div class="a" style="left:167px;top:534px;width:80px;height:21px;background:#add8e6"></div>
<div class="gt" style="left:171px;top:539px">1</div>
<div class="gt" style="left:251px;top:539px">-</div>
<div class="gt" style="left:508px;top:539px">Machining 4</div>
<div class="gt" style="left:809px;top:539px">1</div>
<div class="gt" style="left:888px;top:539px">21:04:12</div>
<div class="gt" style="left:998px;top:539px">18:18:24</div>
<div class="a" style="left:167px;top:555px;width:938px;height:1px;background:#a0a0a0"></div>
<div class="a" style="left:167px;top:556px;width:80px;height:21px;background:#add8e6"></div>
<div class="gt" style="left:171px;top:561px">1</div>
<div class="gt" style="left:251px;top:561px">Twisted Drill D4,2 L55 SD4,2</div>
<div class="gt" style="left:508px;top:561px">Machining 2</div>
<div class="gt" style="left:809px;top:561px">1</div>
<div class="gt" style="left:888px;top:561px">07:42:36</div>
<div class="gt" style="left:998px;top:561px">-</div>
<div class="a" style="left:167px;top:577px;width:938px;height:1px;background:#a0a0a0"></div>
<div class="a" style="left:167px;top:578px;width:80px;height:21px;background:#add8e6"></div>
<div class="gt" style="left:171px;top:583px">1</div>
<div class="gt" style="left:251px;top:583px">-</div>
<div class="gt" style="left:508px;top:583px">Machining 2</div>
<div class="gt" style="left:809px;top:583px">1</div>
<div class="gt" style="left:888px;top:583px">07:42:36</div>
<div class="gt" style="left:998px;top:583px">-</div>
<div class="a" style="left:167px;top:599px;width:938px;height:1px;background:#a0a0a0"></div>
<div class="a" style="left:167px;top:600px;width:80px;height:21px;background:#add8e6"></div>
<div class="gt" style="left:171px;top:605px">1</div>
<div class="gt" style="left:251px;top:605px">-</div>
<div class="gt" style="left:508px;top:605px">Machining 4</div>
<div class="gt" style="left:809px;top:605px">1</div>
<div class="gt" style="left:888px;top:605px">12:15:21</div>
<div class="gt" style="left:998px;top:605px">03:40:33</div>
<div class="a" style="left:167px;top:621px;width:938px;height:1px;background:#a0a0a0"></div>
<div class="a" style="left:167px;top:622px;width:80px;height:21px;background:#add8e6"></div>
<div class="gt" style="left:171px;top:627px">1</div>
<div class="gt" style="left:251px;top:627px">Side Mill D10 L35 SD10</div>
<div class="gt" style="left:508px;top:627px">459425-Plate</div>
<div class="gt" style="left:809px;top:627px">3</div>
<div class="gt" style="left:888px;top:627px">18:33:48</div>
<div class="gt" style="left:998px;top:627px">18:33:48</div>
<div class="a" style="left:167px;top:643px;width:938px;height:1px;background:#a0a0a0"></div>
<div class="a" style="left:167px;top:644px;width:80px;height:3px;background:#add8e6"></div>
<div class="a" style="left:247px;top:467px;width:1px;height:180px;background:#a0a0a0"></div>
<div class="a" style="left:504px;top:467px;width:1px;height:180px;background:#a0a0a0"></div>
<div class="a" style="left:805px;top:467px;width:1px;height:180px;background:#a0a0a0"></div>
<div class="a" style="left:884px;top:467px;width:1px;height:180px;background:#a0a0a0"></div>
<div class="a" style="left:994px;top:467px;width:1px;height:180px;background:#a0a0a0"></div>
<div class="a" style="left:1104px;top:467px;width:1px;height:180px;background:#a0a0a0"></div>
<div class="a" style="left:1105px;top:446px;width:17px;height:201px;background:#f0f0f0"></div>
<div class="a" style="left:1108px;top:450px;width:11px;height:8px"><svg width="11" height="8"><path d="M1.5,6 L5.5,2 L9.5,6" fill="none" stroke="#606060" stroke-width="2"/></svg></div>
<div class="a" style="left:1108px;top:636px;width:11px;height:8px"><svg width="11" height="8"><path d="M1.5,2 L5.5,6 L9.5,2" fill="none" stroke="#606060" stroke-width="2"/></svg></div>
<div class="a" style="left:1106px;top:572px;width:15px;height:17px;background:#cdcdcd"></div>
</body></html>
